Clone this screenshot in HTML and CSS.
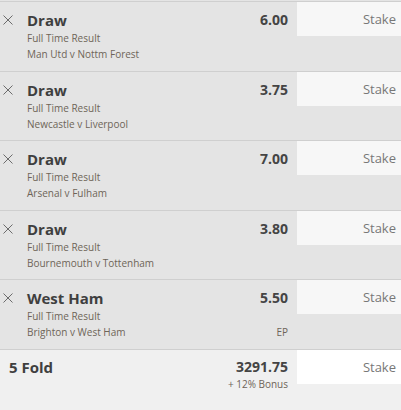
FILE: index.html
```
<!DOCTYPE html>
<html lang="en">
<head>
  <meta charset="UTF-8">
  <title>Bet Slip</title>
  <link rel="stylesheet" href="styles.css">
</head>
<body>

<div class="slip">
  <div class="bet">
    <span class="remove"><svg width="10" height="10" viewBox="0 0 10 10"><path d="M0.5 0.5 L9.5 9.5 M9.5 0.5 L0.5 9.5" /></svg></span>
    <div class="info">
      <div class="pick">Draw</div>
      <div class="sub">Full Time Result</div>
      <div class="sub">Man Utd v Nottm Forest</div>
    </div>
    <div class="odds"><div class="price">6.00</div></div>
    <div class="stake">Stake</div>
  </div>

  <div class="bet">
    <span class="remove"><svg width="10" height="10" viewBox="0 0 10 10"><path d="M0.5 0.5 L9.5 9.5 M9.5 0.5 L0.5 9.5" /></svg></span>
    <div class="info">
      <div class="pick">Draw</div>
      <div class="sub">Full Time Result</div>
      <div class="sub">Newcastle v Liverpool</div>
    </div>
    <div class="odds"><div class="price">3.75</div></div>
    <div class="stake">Stake</div>
  </div>

  <div class="bet">
    <span class="remove"><svg width="10" height="10" viewBox="0 0 10 10"><path d="M0.5 0.5 L9.5 9.5 M9.5 0.5 L0.5 9.5" /></svg></span>
    <div class="info">
      <div class="pick">Draw</div>
      <div class="sub">Full Time Result</div>
      <div class="sub">Arsenal v Fulham</div>
    </div>
    <div class="odds"><div class="price">7.00</div></div>
    <div class="stake">Stake</div>
  </div>

  <div class="bet">
    <span class="remove"><svg width="10" height="10" viewBox="0 0 10 10"><path d="M0.5 0.5 L9.5 9.5 M9.5 0.5 L0.5 9.5" /></svg></span>
    <div class="info">
      <div class="pick">Draw</div>
      <div class="sub">Full Time Result</div>
      <div class="sub">Bournemouth v Tottenham</div>
    </div>
    <div class="odds"><div class="price">3.80</div></div>
    <div class="stake">Stake</div>
  </div>

  <div class="bet">
    <span class="remove"><svg width="10" height="10" viewBox="0 0 10 10"><path d="M0.5 0.5 L9.5 9.5 M9.5 0.5 L0.5 9.5" /></svg></span>
    <div class="info">
      <div class="pick">West Ham</div>
      <div class="sub">Full Time Result</div>
      <div class="sub">Brighton v West Ham</div>
    </div>
    <div class="odds">
      <div class="price">5.50</div>
      <div class="sub ep">EP</div>
    </div>
    <div class="stake">Stake</div>
  </div>

  <div class="fold">
    <div class="fold-name">5 Fold</div>
    <div class="odds">
      <div class="price">3291.75</div>
      <div class="bonus">+ 12% Bonus</div>
    </div>
    <div class="stake">Stake</div>
  </div>
</div>

</body>
</html>
```

FILE: styles.css
```
body {
  margin: 0;
  font-family: 'Open Sans', 'Noto Sans', sans-serif;
  background-color: #f0f0f0;
  color: #444;
}
.slip {
  padding-top: 1px;
  background-color: #e4e4e4;
}
.bet {
  display: grid;
  grid-template-columns: 27px 1fr auto 104px;
  align-items: start;
  height: 68.6px;
  border-top: 1px solid #cfcfcf;
  background-color: #e4e4e4;
}
.remove {
  padding: 13px 0 0 3px;
}
.remove svg {
  display: block;
  stroke: #6b6b6b;
  stroke-width: 1;
}
.info {
  padding-top: 8px;
}
.pick {
  font-size: 15px;
  font-weight: bold;
  line-height: 20px;
  color: #3f3f3f;
}
.sub {
  font-size: 10px;
  line-height: 16px;
  color: #6e6458;
}
.odds {
  padding: 8px 9px 0 0;
  text-align: right;
}
.price {
  font-size: 14px;
  font-weight: bold;
  line-height: 20px;
  color: #444;
}
.ep {
  margin-top: 16px;
}
.stake {
  height: 34px;
  line-height: 34px;
  padding-right: 5px;
  text-align: right;
  font-size: 13px;
  color: #777;
  background-color: #f7f7f7;
}
.fold {
  display: grid;
  grid-template-columns: 1fr auto 104px;
  align-items: start;
  height: 60px;
  border-top: 1px solid #cfcfcf;
  background-color: #f0f0f0;
}
.fold-name {
  padding: 7px 0 0 9px;
  font-size: 15px;
  font-weight: bold;
  line-height: 20px;
  color: #3f3f3f;
}
.fold .odds {
  padding-top: 7px;
}
.bonus {
  font-size: 10px;
  line-height: 14px;
  color: #6e6458;
}
.fold .stake {
  background-color: #fff;
}
```
